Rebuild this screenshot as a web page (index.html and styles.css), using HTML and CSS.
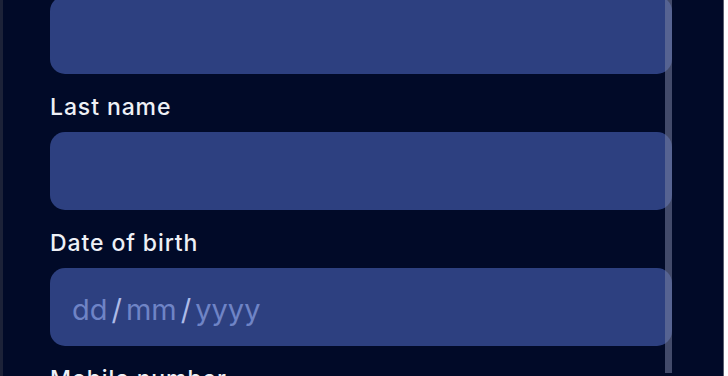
FILE: index.html
```html
<!DOCTYPE html>
<html lang="en">
<head>
  <meta charset="UTF-8">
  <meta name="viewport" content="width=device-width, initial-scale=1.0">
  <title>Sign up</title>
  <link rel="stylesheet" href="styles.css">
</head>
<body>
  <div class="frame">

    <form class="signup-form">

      <div class="field">
        <div class="text-input"></div>
      </div>

      <div class="field">
        <label class="field-label">Last name</label>
        <div class="text-input"></div>
      </div>

      <div class="field">
        <label class="field-label">Date of birth</label>
        <div class="text-input date-input">
          <span class="date-part">dd</span><span class="date-sep">/</span><span class="date-part">mm</span><span class="date-sep">/</span><span class="date-part">yyyy</span>
        </div>
      </div>

      <div class="field">
        <label class="field-label">Mobile number</label>
      </div>

    </form>

    <!-- scroll thumb on top of the form -->
    <div class="scroll-line"></div>

  </div>
</body>
</html>
```

FILE: styles.css
```css
body{
  margin: 0;
  background-color: #ffffff;
  font-family: Inter, "Noto Sans", sans-serif;
  overflow: hidden;
}

.frame{
  position: relative;
  width: 720px;
  height: 376px;
  background-color: #010a28;
  border-left: 3px solid #1c2238;
  border-right: 1px solid #5a6070;
  overflow: hidden;
}

.signup-form{
  display: flex;
  flex-direction: column;
  padding-left: 47px;
  margin-top: -4px;
}

.field{
  display: flex;
  flex-direction: column;
}

.field-label{
  display: block;
  margin-top: 20px;
  margin-bottom: 12px;
  font-size: 23px;
  font-weight: 500;
  line-height: 26px;
  color: #eef0f6;
  letter-spacing: 0.9px;
}

.text-input{
  width: 622px;
  height: 78px;
  border-radius: 15px;
  background-color: #2d4080;
  box-sizing: border-box;
}

.date-input{
  display: flex;
  align-items: center;
  padding-left: 22px;
  padding-top: 4px;
  font-size: 29px;
  color: #6f84c6;
}

.date-sep{
  color: #aebbe8;
  margin: 0 4px;
}

.scroll-line{
  position: absolute;
  top: 0;
  left: 662px;
  width: 7px;
  height: 373px;
  background-color: rgba(120, 128, 160, 0.55);
}
```
